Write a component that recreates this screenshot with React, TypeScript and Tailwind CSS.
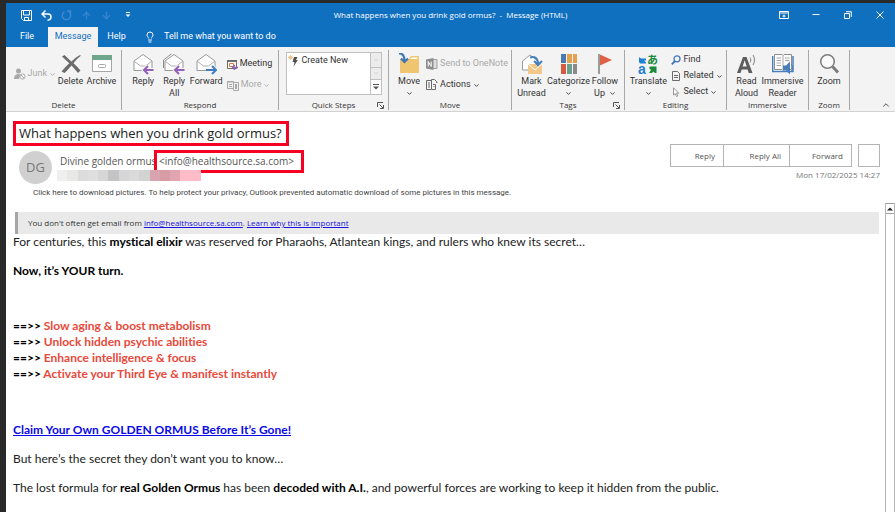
import React from 'react';
import { ArrowDown, ArrowUp, ChevronDown, ChevronUp, Lightbulb } from 'lucide-react';

const Caret = () => <ChevronDown size={7} strokeWidth={3} className="shrink-0" />;

const SaveIcon = () => (
  <svg width="11" height="11" viewBox="0 0 11 11" fill="none" stroke="white">
    <path d="M.5 .5h10v10h-8l-2-2zM2.500 1v4h6v-4M3.500 10.500v-3h4v3" />
  </svg>
);

const UndoIcon = () => (
  <svg width="11" height="11" viewBox="0 0 11 11" fill="none" stroke="white" strokeWidth="1.500">
    <path d="M4.500 .5L1 4l3.500 3.500M1 4h6c2 0 3 1.200 3 3s-1.300 3-3.500 3.200" />
  </svg>
);

const RedoIcon = () => (
  <svg width="11" height="11" viewBox="0 0 11 11" fill="none" stroke="#3f8bd0" strokeWidth="1.300">
    <path d="M3.500 1.800a4.200 4.200 0 1 0 4.300 .2M6 .8h3.500v3.500" />
  </svg>
);

const JunkIcon = () => (
  <svg width="12" height="12" viewBox="0 0 12 12" fill="#a9a9a9" className="shrink-0">
    <circle cx="4.500" cy="3" r="2.500" />
    <path d="M0 11c0-3.500 1.500-5 4.500-5 1 0 1.500 .2 2 .5L5 11z" />
    <circle cx="8.500" cy="8.500" r="2.600" fill="#f3f3f3" stroke="#a9a9a9" />
    <path d="M6.800 6.800l3.400 3.400" stroke="#a9a9a9" />
  </svg>
);

const DeleteIcon = () => (
  <svg width="22" height="22" viewBox="0 0 22 22" fill="#6b6b6b">
    <path d="M2 3.500L4.500 2C7 4.500 9 6.500 11.500 8.600 14 6 16.500 3.700 20 2l.8 .8C18 5 15.500 7.600 13.500 10.200c2.500 2.300 5 4.800 7 7.300L18 20c-2-2.700-4.300-5.300-6.500-7.600C9 15.200 7 17.500 4.500 20L1.500 18.500C4 15.500 6.500 13 9.300 10.200 7 8 4.500 5.800 2 3.500z" />
  </svg>
);

const ArchiveIcon = () => (
  <svg width="22" height="22" viewBox="0 0 22 22">
    <path d="M1.500 7v11.500h19V7" fill="#fff" stroke="#a5a5a5" />
    <path d="M1 2h20v5H1z" fill="#6fa68c" />
    <rect x="7.500" y="11.500" width="7" height="3" rx="1" fill="#fff" stroke="#a5a5a5" />
  </svg>
);

const Envelope = ({ all, forward }: { all?: boolean; forward?: boolean }) => {
  const arrow = forward ? 'M11 17h10M17 13l4 4-4 4' : 'M21.500 17H12M16 13l-4 4 4 4';
  return (
    <svg width="22" height="22" viewBox="0 0 22 22" fill="none">
      {all && <path d="M.5 15V7L8.500 .8" stroke="#8d8d8d" />}
      <path d="M2 8l9-6.500L20 8v9.500H2z" fill="#fff" stroke="#8d8d8d" strokeWidth=".9" />
      <path d="M2.500 8.500L8.500 13h5l6-4.500" stroke="#a5a5a5" strokeWidth=".9" />
      <path d={arrow} stroke="#f3f3f3" strokeWidth="4" />
      <path d={arrow} stroke={forward ? '#3f7fbf' : '#935fb8'} strokeWidth="2" />
    </svg>
  );
};

const MeetingIcon = () => (
  <svg width="11" height="11" viewBox="0 0 11 11" fill="none" className="shrink-0">
    <path d="M.5 1.500h9v8h-9z" fill="#fff" stroke="#6b6b6b" />
    <path d="M0 1h10v2H0z" fill="#6b6b6b" />
    <path d="M2.500 4.500h4v3h-4z" stroke="#d9743c" />
    <path d="M11 8.500H6M8 6L5.500 8.500 8 11" stroke="#935fb8" strokeWidth="1.300" />
  </svg>
);

const MoreIcon = () => (
  <svg width="12" height="11" viewBox="0 0 12 11" fill="none" stroke="#a9a9a9" className="shrink-0">
    <path d="M.5 1.500h6v7h-6zM0 2h7M2 4.500h3M2 6.500h3" />
    <path d="M6.500 2.500h5v8h-5z" fill="#f3f3f3" />
    <path d="M9 4v5" strokeWidth="2" />
  </svg>
);

const QuickStepIcon = () => (
  <svg width="11" height="12" viewBox="0 0 11 12">
    <path d="M6 2h3.500L8 5h1.800L5.500 11.500 6.500 7H4.500z" fill="#4f4f4f" />
    <path d="M2.500 0v5M0 2.500h5M.8 .8l3.400 3.400M4.200 .8L.8 4.200" stroke="#f0b878" strokeWidth=".8" />
  </svg>
);

const MoveIcon = () => (
  <svg width="22" height="22" viewBox="0 0 22 22">
    <path d="M2 6h9l2-3h8v17H2z" fill="#efc66f" />
    <path d="M13.500 4.500h6v1.500h-7z" fill="#fff" />
    <path d="M1 .5c4 0 5.500 2.500 5.500 7M3 5.500l3.500 3.500 3.500-3.500" fill="none" stroke="#3f76b8" strokeWidth="2.200" />
  </svg>
);

const OneNoteIcon = () => (
  <svg width="12" height="12" viewBox="0 0 12 12" className="shrink-0">
    <path d="M5 1.500h6v9H5z" fill="#ddd" stroke="#a0a0a0" />
    <path d="M0 1.500L7.500 0v12L0 10.500z" fill="#8d8d8d" />
    <path d="M2.200 8.500v-5l3 5v-5" fill="none" stroke="#fff" />
  </svg>
);

const ActionsIcon = () => (
  <svg width="12" height="12" viewBox="0 0 12 12" fill="none" stroke="#6b6b6b" className="shrink-0">
    <path d="M.5 1.500h5v9h-5zM2 4h2M2 6h2M2 8h2" />
    <path d="M5.500 2.500V.5h3l2 2v1h1M6 10.500h3.500v-5H7M7.500 7.500h1" />
  </svg>
);

const MarkIcon = () => (
  <svg width="22" height="22" viewBox="0 0 22 22">
    <path d="M1.500 8L9 2l8 6v9h-15.500z" fill="#fff" stroke="#9a9a9a" />
    <path d="M7 11h14v10H7z" fill="#efc88a" />
    <path d="M7 11l7 6 7-6" fill="none" stroke="#fff" />
    <path d="M9 4.500c5-1.500 8 1 8 6.500M13 8l4 4 4-4" fill="none" stroke="#4480c0" strokeWidth="2" />
  </svg>
);

const CategorizeIcon = () => (
  <svg width="18" height="22" viewBox="0 0 18 22">
    <path d="M1 1h5v9H1z" fill="#4a78b0" />
    <path d="M7 1h5v9H7zM13 1h4v9h-4z" fill="#e5a04d" />
    <path d="M1 11h5v10H1z" fill="#d65a3f" />
    <path d="M7 11h5v10H7z" fill="#6c9f8c" />
    <path d="M13 11h4v10h-4z" fill="#8a8a8a" />
  </svg>
);

const FlagIcon = () => (
  <svg width="18" height="22" viewBox="0 0 18 22">
    <path d="M3 1v20" stroke="#7d7d7d" strokeWidth="1.500" />
    <path d="M4 1.500L16 7 4 12.500z" fill="#de5f43" />
  </svg>
);

const TranslateIcon = () => (
  <svg width="24" height="22" viewBox="-2 0 24 22" fontFamily="Liberation Sans, Noto Sans CJK JP, sans-serif" fontWeight="bold">
    <path d="M1 4l2 1.500h5v2H6L8 9.500v1H2L1 9z" fill="#1e7fd6" />
    <path d="M18.500 13.500v6.500H17l-1.500-1.500L14 20h-3l2-3-2-2 1-1.500z" fill="#1b8a3c" />
    <text x="0" y="21" fontSize="14" fill="#1e7fd6">a</text>
    <text x="9" y="11" fontSize="11" fill="#1b8a3c">あ</text>
  </svg>
);

const FindIcon = () => (
  <svg width="10" height="10" viewBox="0 0 10 10" fill="none" stroke="#3f76b8" strokeWidth="1.300">
    <circle cx="6" cy="3.800" r="3" />
    <path d="M4 6L.8 9.300" strokeWidth="1.800" />
  </svg>
);

const RelatedIcon = () => (
  <svg width="10" height="10" viewBox="0 0 10 10" fill="none" stroke="#6b6b6b">
    <path d="M1.500 .5h5l2 2v7h-7zM3 4.500h4M3 6.500h4" />
  </svg>
);

const SelectIcon = () => (
  <svg width="10" height="10" viewBox="0 0 10 10" fill="#fff" stroke="#8d8d8d" strokeWidth=".9">
    <path d="M2.500 .8v7.200l1.800-1.500L5.500 9.500l1.300-.6-1.300-2.700h2.200z" />
  </svg>
);

const ReadAloudIcon = () => (
  <svg width="20" height="22" viewBox="0 0 20 22">
    <path d="M0 20L6 4h3.500l6 16h-3.700l-1.200-3.600H4.700L3.500 20zM5.600 13.600h4.100L7.700 7.200z" fill="#5c5c5c" />
    <path d="M13 4.500c1 1.500 1 3.500 0 5M16 2c2 3.300 2 7 0 10" fill="none" stroke="#7d7d7d" />
  </svg>
);

const ReaderIcon = () => (
  <svg width="22" height="22" viewBox="0 0 22 22">
    <path d="M.7 3v15.500H11h10V3" fill="#fff" stroke="#4a7ebb" strokeWidth="1.500" />
    <path d="M2.500 1.500H10l1 1 1-1h7.500v15H12l-1 1-1-1H2.500z" fill="#fff" stroke="#8d8d8d" />
    <path d="M11 2.500v14M4.500 5h4.500M4.500 7.500h4.500M4.500 10h4.500M4.500 12.500h4.500M13 5h4.500M13 7.500h4.500" stroke="#a5a5a5" />
    <path d="M11 12.500h3l4-4v13l-4-4h-3z" fill="#4a7ebb" />
    <path d="M19.500 11.500c1.500 2 1.500 4.500 0 6.500" fill="none" stroke="#4a7ebb" />
  </svg>
);

const ZoomIcon = () => (
  <svg width="22" height="22" viewBox="0 0 22 22" fill="none">
    <circle cx="9.500" cy="8.500" r="6.800" fill="#fafafa" stroke="#7d7d7d" strokeWidth="1.500" />
    <path d="M14.500 13.500l5.500 6" stroke="#7d7d7d" strokeWidth="3" />
  </svg>
);

const Launcher = () => (
  <button aria-label="More options" className="absolute right-1 bottom-px">
    <svg width="7" height="7" viewBox="0 0 7 7" fill="none" stroke="#555">
      <path d="M.5 5V.5H6M2.500 2.500l3.500 3.500M6.500 3v3.500H3" />
    </svg>
  </button>
);

const Group = ({ label, className, launcher, children }: {
  label: string;
  className: string;
  launcher?: boolean;
  children: React.ReactNode;
}) => (
  <section className={`relative mt-[3px] mb-px flex shrink-0 flex-col border-r border-[#a8a8a8] ${className}`}>
    <div className="flex h-[50px] shrink-0 items-start justify-center pt-[2px]">{children}</div>
    <h2 className="text-center font-['Open_Sans',sans-serif] text-[8px] leading-[10px] text-[#333]">{label}</h2>
    {launcher && <Launcher />}
  </section>
);

const BigButton = ({ icon, lines, caret, className }: {
  icon: React.ReactNode;
  lines: string[];
  caret?: boolean;
  className: string;
}) => (
  <button className={`flex shrink-0 flex-col items-center whitespace-nowrap text-[9px] leading-[11px] ${className}`}>
    <span className="flex h-6 items-center">{icon}</span>
    <span>{lines[0]}</span>
    <span className="flex h-3 items-center gap-1">{lines[1]}{caret && <Caret />}</span>
  </button>
);

const SmallButton = ({ icon, label, caret, muted }: {
  icon: React.ReactNode;
  label: string;
  caret?: boolean;
  muted?: boolean;
}) => (
  <button className={`flex h-4 items-center gap-[2px] whitespace-nowrap text-[9px] ${muted ? 'text-[#a9a9a9]' : ''}`}>
    {icon}
    <span>{label}</span>
    {caret && <Caret />}
  </button>
);

const TitleBar = () => (
  <header className="grid h-6 grid-cols-[1fr_auto_1fr] items-center text-white">
    <div className="flex items-center gap-[9px] pl-[15px]">
      <button aria-label="Save"><SaveIcon /></button>
      <button aria-label="Undo"><UndoIcon /></button>
      <button aria-label="Redo"><RedoIcon /></button>
      <button aria-label="Previous"><ArrowUp size={11} strokeWidth={3} className="text-[#3584cc]" /></button>
      <button aria-label="Next"><ArrowDown size={11} strokeWidth={3} className="text-[#3584cc]" /></button>
      <button aria-label="Customise toolbar" className="pl-1">
        <svg width="6" height="6" viewBox="0 0 6 6" fill="white"><path d="M1 0h4v1H1zM.5 2.500h5L3 5z" /></svg>
      </button>
    </div>
    <h1 className="font-['Open_Sans',sans-serif] text-[8px] whitespace-pre">What happens when you drink gold ormus?  -  Message (HTML)</h1>
    <div className="flex items-center justify-end gap-[22px] pr-[10px]">
      <button aria-label="Ribbon display options">
        <svg width="10" height="8" viewBox="0 0 10 8" fill="none" stroke="white"><path d="M.5 .5h9v7h-9zM.5 2h9M5 6.500v-3M3.500 5h3" /></svg>
      </button>
      <button aria-label="Minimise">
        <svg width="10" height="8" viewBox="0 0 10 8" stroke="white"><path d="M1.500 3.500h7" /></svg>
      </button>
      <button aria-label="Restore">
        <svg width="10" height="8" viewBox="0 0 10 8" fill="none" stroke="white"><path d="M1.500 2.500h5v5h-5zM3 .7h5.300V6" /></svg>
      </button>
      <button aria-label="Close">
        <svg width="10" height="8" viewBox="0 0 10 8" stroke="white"><path d="M1.500 .5l7 7M8.500 .5l-7 7" /></svg>
      </button>
    </div>
  </header>
);

const Tabs = () => (
  <nav className="flex h-5 items-stretch text-[9px] text-white">
    <button className="w-[42px]">File</button>
    <button className="w-[50px] bg-[#f3f3f3] text-[#1070c0]">Message</button>
    <button className="w-[37px]">Help</button>
    <label htmlFor="tell-me" className="flex items-center pl-[9px]"><Lightbulb size={12} aria-label="Tell me" /></label>
    <input
      id="tell-me"
      className="ml-2 w-40 bg-transparent placeholder:text-white placeholder:opacity-100"
      placeholder="Tell me what you want to do"
    />
  </nav>
);

const Ribbon = () => (
  <div className="flex h-[65px] border-b border-[#d2d2d2] bg-[#f3f3f3] text-[#333]">
    <Group label="Delete" className="w-[116px]">
      <div className="w-[46px] pt-[14px] pl-1"><SmallButton icon={<JunkIcon />} label="Junk" caret muted /></div>
      <BigButton className="w-[30px]" icon={<DeleteIcon />} lines={['Delete']} />
      <BigButton className="w-[32px]" icon={<ArchiveIcon />} lines={['Archive']} />
    </Group>
    <Group label="Respond" className="w-[157px]">
      <BigButton className="w-[31px]" icon={<Envelope />} lines={['Reply']} />
      <BigButton className="w-[31px]" icon={<Envelope all />} lines={['Reply', 'All']} />
      <BigButton className="w-[33px]" icon={<Envelope forward />} lines={['Forward']} />
      <div className="flex flex-col gap-[5px] pt-1 pl-1">
        <SmallButton icon={<MeetingIcon />} label="Meeting" />
        <SmallButton icon={<MoreIcon />} label="More" caret muted />
      </div>
    </Group>
    <Group label="Quick Steps" className="w-[110px]" launcher>
      <div className="flex h-[43px] w-24 border border-[#c0c0c0] bg-white">
        <button className="flex h-4 flex-1 items-center gap-[3px] pl-px text-[9px] whitespace-nowrap"><QuickStepIcon />Create New</button>
        <div className="grid w-[11px] grid-rows-3 border-l border-[#c0c0c0] text-[#b0b0b0]">
          <button aria-label="Scroll up" className="grid place-items-center bg-[#ececec]"><ChevronUp size={6} /></button>
          <button aria-label="Scroll down" className="grid place-items-center border-y border-[#c0c0c0] bg-[#ececec]"><ChevronDown size={6} /></button>
          <button aria-label="All quick steps" className="grid place-items-center">
            <svg width="6" height="6" viewBox="0 0 6 6" fill="#555"><path d="M0 0h6v1H0zM0 2.500h6L3 5.500z" /></svg>
          </button>
        </div>
      </div>
    </Group>
    <Group label="Move" className="w-[123px]">
      <BigButton className="w-[34px]" icon={<MoveIcon />} lines={['Move']} caret />
      <div className="flex flex-col gap-[5px] pt-1">
        <SmallButton icon={<OneNoteIcon />} label="Send to OneNote" muted />
        <SmallButton icon={<ActionsIcon />} label="Actions" caret />
      </div>
    </Group>
    <Group label="Tags" className="w-[113px]" launcher>
      <BigButton className="w-[32px]" icon={<MarkIcon />} lines={['Mark', 'Unread']} />
      <BigButton className="w-[42px]" icon={<CategorizeIcon />} lines={['Categorize']} caret />
      <BigButton className="w-[31px]" icon={<FlagIcon />} lines={['Follow', 'Up']} caret />
    </Group>
    <Group label="Editing" className="w-[102px]">
      <BigButton className="w-[40px]" icon={<TranslateIcon />} lines={['Translate']} caret />
      <div className="flex flex-col pl-[3px]">
        <SmallButton icon={<FindIcon />} label="Find" />
        <SmallButton icon={<RelatedIcon />} label="Related" caret />
        <SmallButton icon={<SelectIcon />} label="Select" caret />
      </div>
    </Group>
    <Group label="Immersive" className="w-[82px]">
      <BigButton className="w-[30px]" icon={<ReadAloudIcon />} lines={['Read', 'Aloud']} />
      <BigButton className="w-[42px]" icon={<ReaderIcon />} lines={['Immersive', 'Reader']} />
    </Group>
    <Group label="Zoom" className="w-[41px]">
      <BigButton className="w-[30px]" icon={<ZoomIcon />} lines={['Zoom']} />
    </Group>
    <button aria-label="Collapse ribbon" className="mt-auto ml-auto pr-1 pb-px"><ChevronUp size={10} /></button>
  </div>
);

const mosaic = [
  'bg-[#efefef]', 'bg-[#e8e8e6]', 'bg-[#dcdcdc]', 'bg-[#e0dfe0]', 'bg-[#d6d6d6]', 'bg-[#c4c4c6]', 'bg-[#d6d6d6]',
  'bg-[#dadada]', 'bg-[#d2d4d2]', 'bg-[#d8a4b0]', 'bg-[#d89ca4]', 'bg-[#e2a4b0]', 'bg-[#ffbcc8]', 'bg-[#ffbcc8]',
];

const MessageHeader = () => (
  <div className="flex h-[91px] justify-between pr-[15px] pl-[7px] font-['Open_Sans',sans-serif]">
    <div>
      <h2 className="mt-[9px] w-[276px] border-3 border-[#f60024] pl-[3px] text-[13px] leading-[19px] whitespace-nowrap text-[#222]">
        What happens when you drink gold ormus?
      </h2>
      <div className="flex pt-1 pl-[6px]">
        <div className="mt-px grid size-[33px] place-items-center rounded-full bg-[#d0d0d0] text-[13px] text-[#777]">DG</div>
        <div className="pl-[5px]">
          <div className="flex text-[10px] leading-[17px] whitespace-nowrap text-[#555]">
            <span className="w-[97px] pt-[3px] pl-[3px]">Divine golden ormus</span>
            <span className="w-[150px] border-3 border-[#f60024] pl-[2px]">&lt;info@healthsource.sa.com&gt;</span>
          </div>
          <div className="relative -mt-[3px] grid h-[11px] w-36 grid-cols-14">
            {mosaic.map((color, i) => <span key={i} className={color} />)}
          </div>
        </div>
      </div>
      <p className="pt-[3px] pl-5 font-[Roboto,sans-serif] text-[8px] leading-[12px] whitespace-nowrap text-[#444]">
        Click here to download pictures. To help protect your privacy, Outlook prevented automatic download of some pictures in this message.
      </p>
    </div>
    <div className="pt-8 text-[#555]">
      <div className="flex h-[23px] text-[8px]">
        <button className="w-[54px] border border-[#b4b4b4] pr-2 text-right">Reply</button>
        <button className="w-[66px] border-y border-r border-[#b4b4b4] pr-2 text-right">Reply All</button>
        <button className="w-[62px] border-y border-r border-[#b4b4b4] pr-2 text-right">Forward</button>
        <button aria-label="More actions" className="ml-[6px] w-[22px] border border-[#b4b4b4]" />
      </div>
      <p className="pt-px text-right text-[8px] leading-[14px] text-[#777]">Mon 17/02/2025 14:27</p>
    </div>
  </div>
);

const benefits = [
  'Slow aging & boost metabolism',
  'Unlock hidden psychic abilities',
  'Enhance intelligence & focus',
  'Activate your Third Eye & manifest instantly',
];

const MessageBody = () => (
  <div className="flex flex-1">
    <div className="flex-1 pt-[9px] pr-[6px] pl-[7px]">
      <p className="ml-[2px] border-l-3 border-[#a6a6a6] bg-[#e9e9e9] pl-[10px] font-['Open_Sans',sans-serif] text-[8px] leading-[22px] text-[#333]">
        You don't often get email from <a href="#sender" className="text-[#1a12e0] underline">info@healthsource.sa.com</a>.{' '}
        <a href="#learn" className="text-[#1a12e0] underline">Learn why this is important</a>
      </p>
      <article className="font-[Lato,sans-serif] text-[12px] leading-4 text-[#222] [font-variant-ligatures:none]">
        <p>For centuries, this <b className="text-black">mystical elixir</b> was reserved for Pharaohs, Atlantean kings, and rulers who knew its secret…</p>
        <p className="pt-[13px] font-bold text-black">Now, it’s YOUR turn.</p>
        <ul className="pt-[39px] font-bold text-[#e8493a]">
          {benefits.map((b) => <li key={b}><span className="text-black">==&gt;&gt;</span> {b}</li>)}
        </ul>
        <p className="pt-10"><a href="#claim" className="font-bold text-[#0a08e8] underline">Claim Your Own GOLDEN ORMUS Before It’s Gone!</a></p>
        <p className="pt-[13px]">But here’s the secret they don’t want you to know…</p>
        <p className="pt-[13px]">
          The lost formula for <b className="text-black">real Golden Ormus</b> has been <b className="text-black">decoded with A.I.</b>, and powerful forces are working to keep it hidden from the public.
        </p>
      </article>
    </div>
    <div className="flex w-[10px] flex-col border-x border-[#b4b4b4]">
      <button aria-label="Scroll up" className="grid h-[11px] place-items-center border-y border-[#a0a0a0]">
        <svg width="6" height="4" viewBox="0 0 6 4" fill="#222"><path d="M0 3.500L3 .5l3 3z" /></svg>
      </button>
    </div>
  </div>
);

export default function App() {
  return (
    <div className="flex min-h-screen flex-col border-t-3 border-l-6 border-[#292929] bg-white font-[Roboto,sans-serif]">
      <div className="bg-[#1070c0]">
        <TitleBar />
        <Tabs />
      </div>
      <Ribbon />
      <main className="flex flex-1 flex-col">
        <MessageHeader />
        <MessageBody />
      </main>
    </div>
  );
}
